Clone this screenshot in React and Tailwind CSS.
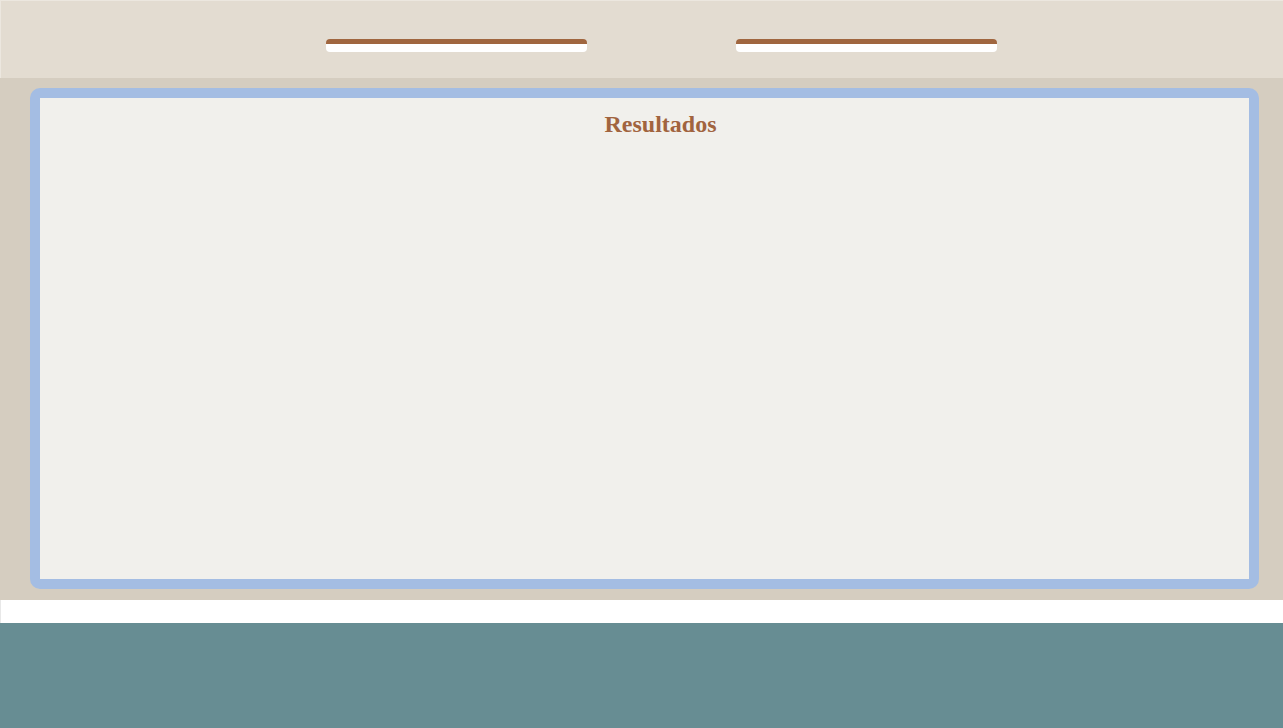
import React from "react";

const SearchBar = () => (
  <div className="w-[261px] h-[13px] rounded-[4px] bg-white border-t-[5px] border-[#a0663f]" />
);

const App = () => {
  return (
    <div className="w-full min-h-[728px] flex flex-col bg-white" style={{ fontFamily: '"Liberation Serif", serif' }}>
      {/* Header */}
      <header className="h-[78px] bg-[#e3dcd1] border-l border-t border-[#ece7df] flex items-start pt-[38px] pl-[325px] gap-[149px]">
        <SearchBar />
        <SearchBar />
      </header>

      {/* Results */}
      <main className="h-[522px] bg-[#d5cdc0] pl-[30px] pr-[24px] pt-[10px] pb-[11px]">
        <section className="h-full rounded-[10px] border-[10px] border-[#a4bde3] bg-[#f1f0ec]">
          <h2 className="flex justify-center pl-[32px] pt-[11px] text-[24px] leading-[30px] font-bold text-[#a1643f]">
            Resultados
          </h2>
        </section>
      </main>

      <div className="h-[23px] bg-white border-l border-[#e8e8e8]" />

      {/* Footer */}
      <footer className="h-[105px] bg-[#678d93]" />
    </div>
  );
};

export default App;
